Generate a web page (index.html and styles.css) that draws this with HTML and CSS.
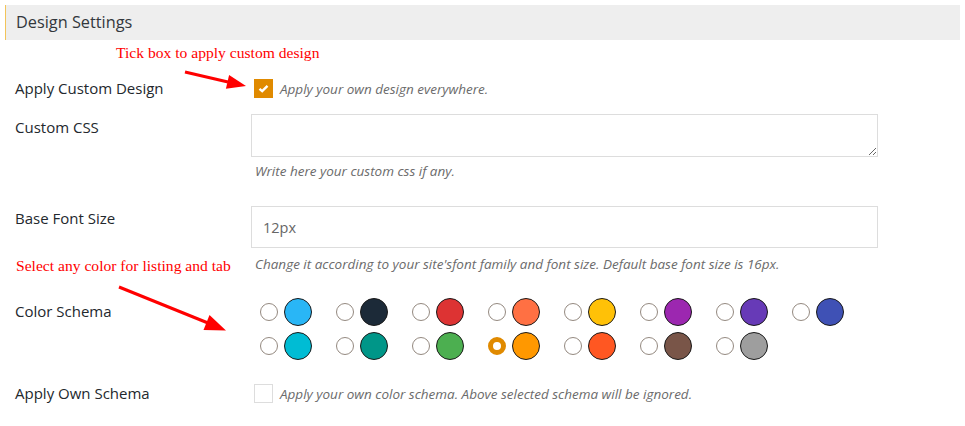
FILE: index.html
```html
<!DOCTYPE html>
<html>
<head>
<meta charset="utf-8">
<link rel="stylesheet" href="styles.css">
</head>
<body>
<div class="page">
  <h2 class="section-title">Design Settings</h2>
  <div class="form">
    <div class="row row-first">
      <div class="label">Apply Custom Design</div>
      <div class="field inline">
        <span class="check checked"><svg width="11" height="9" viewBox="0 0 11 9"><path d="M1.5 4.8 L4.2 7.2 L9.5 1.8" fill="none" stroke="#fff" stroke-width="2.4"/></svg></span>
        <span class="desc">Apply your own design everywhere.</span>
      </div>
    </div>
    <div class="row row-css">
      <div class="label pad4">Custom CSS</div>
      <div class="field">
        <textarea class="textarea"></textarea>
        <div class="desc help help-css">Write here your custom css if any.</div>
      </div>
    </div>
    <div class="row row-font">
      <div class="label pad3">Base Font Size</div>
      <div class="field">
        <input class="input" type="text" value="12px">
        <div class="desc help help-font">Change it according to your site'sfont family and font size. Default base font size is 16px.</div>
      </div>
    </div>
    <div class="row row-colors">
      <div class="label pad4">Color Schema</div>
      <div class="field">
        <div class="swatches">
          <div class="opt"><span class="radio"></span><span class="dot" style="background:#29b6f6"></span></div>
          <div class="opt"><span class="radio"></span><span class="dot" style="background:#1c2a38"></span></div>
          <div class="opt"><span class="radio"></span><span class="dot" style="background:#dd3333"></span></div>
          <div class="opt"><span class="radio"></span><span class="dot" style="background:#ff7043"></span></div>
          <div class="opt"><span class="radio"></span><span class="dot" style="background:#ffc107"></span></div>
          <div class="opt"><span class="radio"></span><span class="dot" style="background:#9c27b0"></span></div>
          <div class="opt"><span class="radio"></span><span class="dot" style="background:#673ab7"></span></div>
          <div class="opt"><span class="radio"></span><span class="dot" style="background:#3f51b5"></span></div>
          <div class="opt"><span class="radio"></span><span class="dot" style="background:#00bcd4"></span></div>
          <div class="opt"><span class="radio"></span><span class="dot" style="background:#009688"></span></div>
          <div class="opt"><span class="radio"></span><span class="dot" style="background:#4caf50"></span></div>
          <div class="opt"><span class="radio selected"></span><span class="dot" style="background:#ff9800"></span></div>
          <div class="opt"><span class="radio"></span><span class="dot" style="background:#ff5722"></span></div>
          <div class="opt"><span class="radio"></span><span class="dot" style="background:#795548"></span></div>
          <div class="opt"><span class="radio"></span><span class="dot" style="background:#9e9e9e"></span></div>
        </div>
      </div>
    </div>
    <div class="row row-own">
      <div class="label">Apply Own Schema</div>
      <div class="field inline">
        <span class="check"></span>
        <span class="desc">Apply your own color schema. Above selected schema will be ignored.</span>
      </div>
    </div>
  </div>

  <div class="note note-tick">Tick box to apply custom design</div>
  <div class="note note-color">Select any color for listing and tab</div>
  <svg class="arrows" width="965" height="426" viewBox="0 0 965 426">
    <line x1="185" y1="72" x2="228" y2="82" stroke="#ff0000" stroke-width="3"/>
    <polygon points="246,86 225.9,88.7 229.1,75.1" fill="#ff0000"/>
    <line x1="119" y1="287" x2="208" y2="323" stroke="#ff0000" stroke-width="3"/>
    <polygon points="226,330.5 203.5,329.9 209.5,315.1" fill="#ff0000"/>
  </svg>
</div>
</body>
</html>
```

FILE: styles.css
```css
html, body {
  margin: 0;
  padding: 0;
  background: #ffffff;
}

.page {
  position: relative;
  width: 965px;
  height: 426px;
  overflow: hidden;
  font-family: "Open Sans", "Noto Sans", sans-serif;
  color: #23282d;
}

.section-title {
  margin: 5px 5px 0 5px;
  height: 35px;
  box-sizing: border-box;
  background: #eeeeee;
  border-left: 1px solid #f2c45a;
  padding: 0 0 0 10px;
  font-size: 16.3px;
  font-weight: 400;
  line-height: 35px;
  color: #32373c;
}

.form {
  padding-left: 15px;
}

.row {
  display: grid;
  grid-template-columns: 236px 627px;
}

.row-first { margin-top: 39px; }
.row-css { margin-top: 16px; }
.row-font { margin-top: 26px; }
.row-colors { margin-top: 25px; }
.row-own { margin-top: 24px; }

.label {
  font-size: 15px;
  line-height: 19px;
  color: #23282d;
}

.pad3 { padding-top: 3px; }
.pad4 { padding-top: 4px; }

.field.inline {
  display: flex;
  align-items: center;
  gap: 7px;
  padding-left: 3px;
}

.check {
  width: 19px;
  height: 19px;
  box-sizing: border-box;
  border: 1px solid #dddddd;
  background: #ffffff;
  display: flex;
  align-items: center;
  justify-content: center;
  flex: none;
}

.check.checked {
  background: #e08a00;
  border-color: #e08a00;
}

.desc {
  font-size: 13.5px;
  font-style: italic;
  color: #6b6b6b;
  line-height: 18px;
}

.help {
  padding-left: 4px;
}

.help-css { margin-top: 5px; }
.help-font { margin-top: 7px; }

.textarea {
  display: block;
  width: 627px;
  height: 43px;
  box-sizing: border-box;
  border: 1px solid #dddddd;
  margin: 0;
  padding: 6px 10px;
  resize: vertical;
  font-family: "Open Sans", sans-serif;
  font-size: 14px;
  border-radius: 0;
}

.input {
  display: block;
  width: 627px;
  height: 42px;
  box-sizing: border-box;
  border: 1px solid #dddddd;
  margin: 0;
  padding: 0 11px;
  font-family: "Open Sans", sans-serif;
  font-size: 14.5px;
  color: #666666;
  border-radius: 0;
  outline: none;
}

.swatches {
  display: grid;
  grid-template-columns: repeat(8, 52px);
  column-gap: 24px;
  row-gap: 6px;
  padding-left: 9px;
}

.opt {
  display: flex;
  align-items: center;
  gap: 6px;
}

.radio {
  width: 18px;
  height: 18px;
  box-sizing: border-box;
  border-radius: 50%;
  border: 1.5px solid #948980;
  background: #ffffff;
  flex: none;
}

.radio.selected {
  border: 5px solid #e08a00;
}

.dot {
  width: 28px;
  height: 28px;
  box-sizing: border-box;
  border-radius: 50%;
  border: 1px solid #1a1a1a;
  flex: none;
}

.note {
  position: absolute;
  font-family: "Liberation Serif", "Times New Roman", serif;
  font-size: 15.6px;
  color: #ff0000;
  line-height: 18px;
  white-space: nowrap;
}

.note-tick {
  left: 116px;
  top: 44px;
}

.note-color {
  left: 16px;
  top: 257px;
}

.arrows {
  position: absolute;
  left: 0;
  top: 0;
  pointer-events: none;
}
```
